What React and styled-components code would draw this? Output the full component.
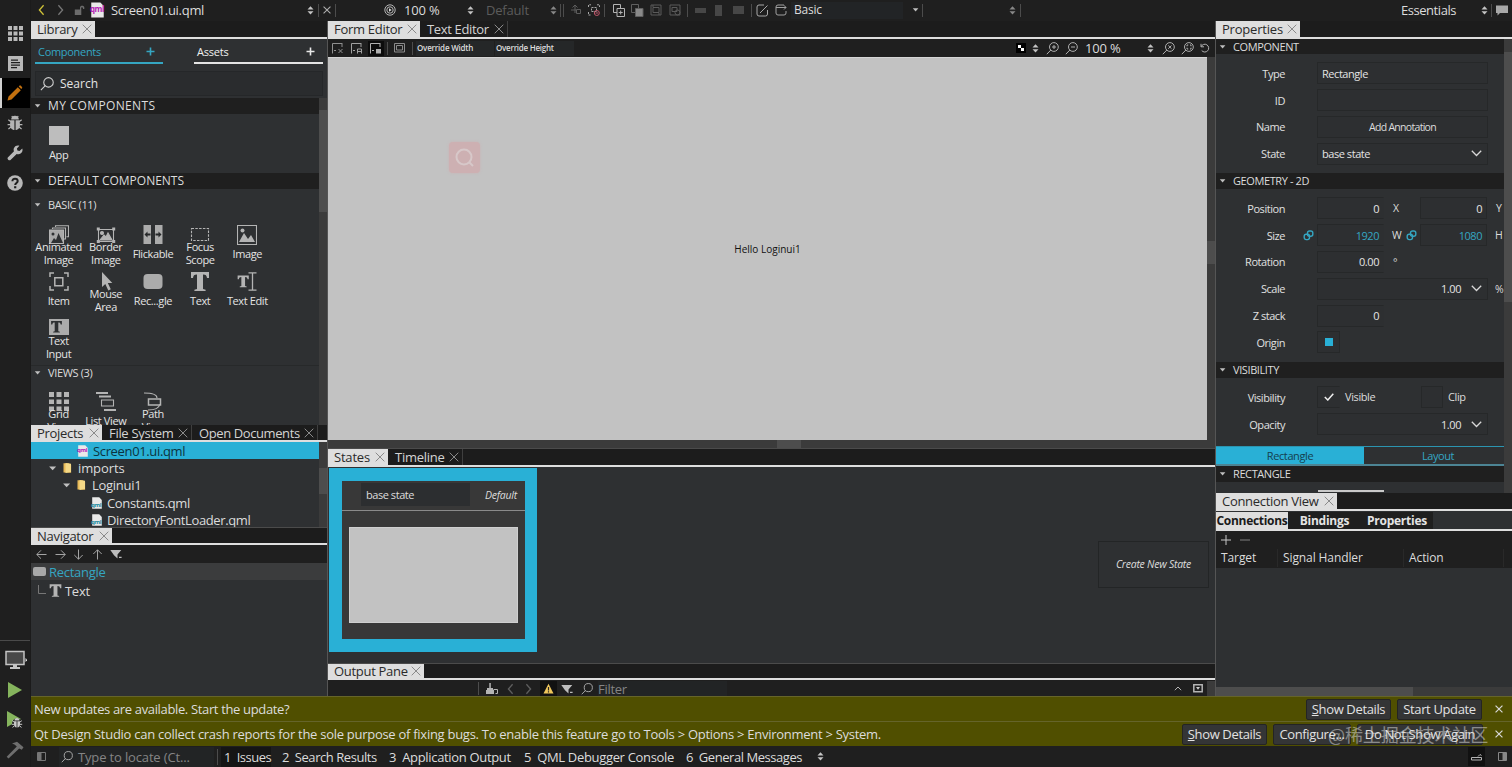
import React from "react";
import styled, { createGlobalStyle, ThemeProvider } from "styled-components";

const theme = {
    bar: "#1f1f1f",
    panel: "#2e3032",
    field: "#2d2f31",
    line: "#262829",
    accent: "#29b0d6",
    accentText: "#35a6c2",
    tab: "#dedede",
    text: "#dcdcdc",
    scroll: "#3b3b3b",
    handle: "#4d4d4d",
    canvas: "#c2c2c2",
    info: "#504f00",
};

const GlobalStyle = createGlobalStyle`
    * { box-sizing: border-box; }
    body {
        margin: 0;
        overflow: hidden;
        background: #1f1f1f;
        font-family: "Open Sans", "Noto Sans", "Noto Sans CJK SC", sans-serif;
        font-size: 13px;
        color: #dcdcdc;
    }
    svg { display: block; flex: none; }
`;

const Window = styled.div`
    display: flex;
    width: 1512px;
    height: 767px;
    background: ${p => p.theme.bar};
    white-space: nowrap;
    overflow: hidden;
`;

const Column = styled.div`
    display: flex;
    flex-direction: column;
    min-width: 0;
    width: ${p => p.$w ? `${p.$w}px` : "auto"};
    flex: ${p => p.$w ? "none" : 1};
    border-left: ${p => p.$edge ? "1px solid #555" : "none"};
`;

const Row = styled.div`
    display: flex;
    align-items: center;
    height: ${p => p.$h ? `${p.$h}px` : "auto"};
    flex: none;
`;

const Gap = styled.span`
    flex: none;
    width: ${p => p.$w}px;
`;

const Fill = styled.span`
    flex: 1;
`;

const Label = styled.span`
    display: block;
    flex: none;
    width: ${p => p.$w ? `${p.$w}px` : "auto"};
    font-size: ${p => p.$size || 13}px;
    line-height: 16px;
    letter-spacing: ${p => p.$ls === undefined ? (p.$size ? 0 : -0.29) : p.$ls}px;
    color: ${p => p.$color || p.theme.text};
    text-align: ${p => p.$align || "left"};
    font-style: ${p => p.$italic ? "italic" : "normal"};
    font-weight: ${p => p.$bold ? 600 : 400};
`;

const Divider = styled.span`
    width: 1px;
    height: ${p => p.$h || 13}px;
    flex: none;
    background: #4c4c4c;
`;

/* mode selector on the far left */
const ModeBar = styled.div`
    display: flex;
    flex-direction: column;
    width: 31px;
    flex: none;
    padding-top: 18px;
    border-right: 1px solid #1b1b1b;
`;

const Mode = styled.div`
    display: flex;
    align-items: center;
    justify-content: center;
    height: 30px;
    flex: none;
    background: ${p => p.$on ? "#000" : "transparent"};
    border-left: ${p => p.$on ? "2px solid #d0d0d0" : "none"};
    padding-right: ${p => p.$on ? 2 : 0}px;
`;

const RunArea = styled.div`
    margin-top: auto;
    height: 127px;
    border-top: 1px solid #4a4a4a;
    padding-top: 4px;
`;

const Workspace = styled.div`
    display: flex;
    height: 675px;
`;

/* dock tabs */
const TabStrip = styled.div`
    display: flex;
    height: ${p => p.$h || 18}px;
    flex: none;
    background: #1c1c1c;
    border-bottom: 2px solid ${p => p.theme.tab};
    border-top: ${p => p.$top ? "1px solid #4b4b4b" : "none"};
`;

const TabItem = styled.div`
    display: flex;
    align-items: center;
    justify-content: space-between;
    width: ${p => p.$w}px;
    padding: 0 3px 0 ${p => p.$on ? 6 : 7}px;
    background: ${p => p.$on ? p.theme.tab : "transparent"};
    border-right: ${p => p.$on ? "none" : "1px solid #3f3f3f"};
`;

const Toolbar = styled.div`
    display: flex;
    align-items: center;
    flex: none;
    height: ${p => p.$h}px;
    padding-top: ${p => p.$pt || 0}px;
    padding-bottom: ${p => p.$pb || 0}px;
    background: ${p => p.theme.bar};
`;

const Panel = styled.div`
    display: flex;
    flex: none;
    height: ${p => p.$h}px;
    background: ${p => p.theme.panel};
    overflow: hidden;
`;

const Track = styled.div`
    width: 8px;
    flex: none;
    padding-top: ${p => p.$top}px;
    background: ${p => p.theme.scroll};
    &::before {
        content: "";
        display: block;
        height: ${p => p.$len}px;
        background: ${p => p.theme.handle};
    }
`;

const ScrollSlot = styled.div`
    display: flex;
    align-self: stretch;
`;

const LibTab = styled.div`
    display: flex;
    align-items: center;
    justify-content: space-between;
    width: ${p => p.$w}px;
    height: 25px;
    padding: 2px 8px 0 3px;
    border-bottom: 2px solid ${p => p.$on ? p.theme.accentText : "#e4e4e4"};
`;

const SearchBox = styled.div`
    display: flex;
    align-items: center;
    flex: none;
    gap: 6px;
    height: 25px;
    margin: 7px 4px 2px;
    padding-left: 4px;
    background: #2a2c2e;
    border: 1px solid #252729;
`;

const Section = styled.div`
    display: flex;
    align-items: center;
    flex: none;
    height: ${p => p.$h || 16}px;
    gap: 7px;
    padding-left: 3px;
    background: ${p => p.$plain ? "transparent" : "#1f1f1f"};
    border-top: ${p => p.$line ? "1px solid #27292a" : "none"};
`;

const ItemGrid = styled.div`
    display: grid;
    flex: none;
    grid-template-columns: repeat(5, 47.2px);
    grid-auto-rows: 47px;
    padding: ${p => p.$pt}px 0 0 4px;
    height: ${p => p.$h}px;
    overflow: hidden;
`;

const Item = styled.div`
    display: flex;
    flex-direction: column;
    align-items: center;
`;

const ItemText = styled.div`
    display: flex;
    flex-direction: column;
    align-items: center;
    justify-content: center;
    height: 16px;
    font-size: 11px;
    line-height: 13px;
    letter-spacing: -0.38px;
    color: #e4e4e4;
`;

const TreeRow = styled.div`
    display: flex;
    align-items: center;
    gap: ${p => p.$gap || 5}px;
    flex: none;
    height: ${p => p.$h || 17.35}px;
    padding-left: ${p => p.$in}px;
    background: ${p => p.$on ? p.theme.accent : p.$hl ? "#3b3c3d" : "transparent"};
`;

const Dark = styled.div`
    display: flex;
    align-items: center;
    flex: none;
    height: ${p => p.$h || 15}px;
    width: ${p => p.$w}px;
    padding-left: ${p => p.$pl || 0}px;
    background: ${p => p.$bg || "#252728"};
`;

/* form editor */
const Canvas = styled.div`
    display: flex;
    justify-content: center;
    align-items: center;
    flex: 1;
    position: relative;
    background: ${p => p.theme.canvas};
    border-top: 1px solid #d5d5d5;
`;

const Finder = styled.div`
    position: absolute;
    left: 121px;
    top: 84px;
    width: 31px;
    height: 31px;
    display: flex;
    align-items: center;
    justify-content: center;
    border-radius: 4px;
    background: #cdb0b2;
    box-shadow: 0 0 3px #cbb3b5;
`;

const BottomTrack = styled.div`
    display: flex;
    justify-content: center;
    height: 8px;
    background: ${p => p.theme.scroll};
    &::before {
        content: "";
        width: 24px;
        background: #4d4d4d;
        margin-left: 34px;
    }
`;

/* states */
const StateCard = styled.div`
    width: 208px;
    height: 184px;
    margin: 1px 0 0 1px;
    border: 13px solid ${p => p.theme.accent};
    border-right-width: 12px;
    background: #383838;
`;

const StateHead = styled.div`
    display: flex;
    align-items: center;
    height: 30px;
    padding: 0 0 2px 19px;
    border-bottom: 1px solid #8a8a8a;
`;

const StatePreview = styled.div`
    width: 169px;
    height: 96px;
    margin: 16px 0 0 7px;
    background: ${p => p.theme.canvas};
    border: 1px solid #cfcfcf;
`;

const NewState = styled.div`
    display: flex;
    align-items: center;
    justify-content: center;
    width: 111px;
    height: 47px;
    margin: 74px 6px 0 auto;
    padding-bottom: 1px;
    border: 1px solid #232526;
`;

/* properties */
const PropRow = styled.div`
    display: flex;
    align-items: center;
    height: 26.8px;
`;

const PropName = styled.div`
    width: 69px;
    flex: none;
    text-align: right;
    font-size: 11px;
    letter-spacing: -0.45px;
    color: #e0e0e0;
`;

const Field = styled.div`
    display: flex;
    align-items: center;
    justify-content: ${p => p.$align || "flex-start"};
    flex: none;
    width: ${p => p.$w}px;
    height: 22px;
    padding: 0 ${p => p.$pr === undefined ? 4 : p.$pr}px 0 4px;
    font-size: 11px;
    letter-spacing: -0.45px;
    color: ${p => p.$blue ? p.theme.accentText : "#e4e4e4"};
    background: ${p => p.theme.field};
    border: 1px solid ${p => p.theme.line};
    border-right-color: ${p => p.$open ? "transparent" : p.theme.line};
`;

const Switcher = styled.div`
    display: flex;
    flex: none;
    height: 20px;
    border-top: 1px solid #2b94b0;
    border-bottom: 2px solid #4c8494;
`;

const Switch = styled.div`
    display: flex;
    align-items: center;
    justify-content: center;
    flex: none;
    width: ${p => p.$w}px;
    padding-bottom: 1px;
    font-size: 11px;
    letter-spacing: -0.4px;
    color: ${p => p.$on ? "#16404e" : p.theme.accentText};
    background: ${p => p.$on ? p.theme.accent : "transparent"};
`;

const PadBlock = styled.div`
    flex: none;
    height: ${p => p.$h}px;
    padding-top: ${p => p.$pt}px;
    overflow: hidden;
    background: ${p => p.theme.panel};
`;

const Unit = styled.span`
    width: ${p => p.$w || 21}px;
    flex: none;
    padding-left: 7px;
    font-size: 10.5px;
    color: #dcdcdc;
`;

const Dot = styled.span`
    width: 8px;
    height: 8px;
    flex: none;
    background: ${p => p.theme.accent};
`;

const NextField = styled.div`
    width: 66px;
    height: 2px;
    margin: 8px 0 0 102px;
    background: #c9c9c9;
`;

/* connections */
const ConnTabs = styled.div`
    display: flex;
    height: 20px;
    flex: none;
    padding-top: 1px;
    background: #2e3032;
    border-bottom: 2px solid ${p => p.theme.tab};
`;

const ConnTab = styled.div`
    display: flex;
    align-items: center;
    justify-content: center;
    width: ${p => p.$w}px;
    height: 17px;
    font-size: 12px;
    font-weight: 700;
    letter-spacing: ${p => p.$ls || 0}px;
    color: ${p => p.$on ? "#1a1a1a" : "#e4e4e4"};
    background: ${p => p.$on ? p.theme.tab : "#1f1f1f"};
`;

const TableHead = styled.div`
    width: ${p => p.$w}px;
    height: 18px;
    padding-left: 5px;
    line-height: 18px;
    font-size: 12px;
    letter-spacing: -0.1px;
    border-right: 1px solid #292929;
`;

const SideTrack = styled.div`
    height: 9px;
    background: ${p => p.theme.scroll};
    &::before {
        content: "";
        display: block;
        width: 197px;
        height: 9px;
        background: ${p => p.theme.handle};
    }
`;

/* notification bars */
const InfoBar = styled.div`
    display: flex;
    align-items: center;
    height: 25px;
    flex: none;
    padding-left: 3px;
    background: ${p => p.theme.info};
    border-top: 1px solid #65642a;
`;

const Button = styled.div`
    display: flex;
    align-items: center;
    justify-content: center;
    flex: none;
    width: ${p => p.$w}px;
    height: 21px;
    margin-right: 6px;
    font-size: 13px;
    letter-spacing: -0.36px;
    color: #e2e2e2;
    background: #343536;
    border: 1px solid #242424;
    border-radius: 2px;
    u { text-underline-offset: 1px; }
`;

const Watermark = styled.div`
    position: absolute;
    left: 1328px;
    top: 721px;
    font-family: "Noto Sans CJK SC", sans-serif;
    font-size: 18px;
    line-height: 26px;
    letter-spacing: -0.1px;
    color: rgba(225, 225, 225, 0.5);
`;

const Svg = ({ w = 16, h, vb, children, c = "#b4b4b4", sw = 1, f = "none" }) => (
    <svg width={w} height={h || w} viewBox={vb || `0 0 ${w} ${h || w}`}
        fill={f} stroke={f === "none" ? c : "none"} strokeWidth={sw}>
        {children}
    </svg>
);

const Cross = ({ c = "#8a8a8a", s = 10, sw = 1 }) => (
    <Svg w={s} vb="0 0 10 10" c={c} sw={sw}><path d="M.7.7l8.6 8.6M9.3.7L.7 9.3" /></Svg>
);
const Down = ({ c = "#c0c0c0", w = 7 }) => <Svg w={w} h={w === 7 ? 4 : 5} vb="0 0 7 4" f={c}><path d="M.8.3h5.6L3.6 3.4z" /></Svg>;
const UpDown = ({ c = "#c4c4c4" }) => (
    <Svg w={7} h={9} f={c}><path d="M.5 3.6h6L3.500.3zM.5 5.200h6L3.500 8.500z" /></Svg>
);
const Chevron = () => <Svg w={11} h={7} c="#d8d8d8" sw={1.3}><path d="M.8.8l4.7 4.7L10.2.8" /></Svg>;
const Angle = ({ c = "#777", left }) => (
    <Svg w={7} h={12} c={c} sw={1.3}><path d={left ? "M5.6 1.2L1.4 6l4.2 4.8" : "M1.4 1.2L5.6 6l-4.2 4.8"} /></Svg>
);
const Plus = ({ c = "#e8e8e8" }) => <Svg w={9} c={c} sw={1.6}><path d="M4.5.5v8M.5 4.5h8" /></Svg>;
const Loupe = ({ w = 13, c = "#b0b0b0", children }) => (
    <Svg w={w} vb="0 0 13 13" c={c}><circle cx="7.9" cy="5" r="4.4" /><path d="M4.9 8L.8 12.2" />{children}</Svg>
);
const Arrow = ({ r }) => (
    <Svg w={11} c="#a4a4a4"><path transform={`rotate(${r} 5.5 5.5)`} d="M10.5 5.5H.8M5 1.3L.8 5.5 5 9.7" /></Svg>
);
const Funnel = () => <Svg w={13} h={10} f="#bdbdbd"><path d="M.3 1h11L7.500 5.500v3.900L4 6.200zM9 7.700h2.600v1.300H9z" /></Svg>;
const Bug = ({ c = "#b4b4b4", w = 16 }) => (
    <Svg w={w} vb="0 0 16 16" c={c} sw={1.2}>
        <path d="M3.400 5.300h4v9.700C5 15 3 12.800 3 10zM12.600 5.300h-4v9.700c2.400 0 4.400-2.200 4.400-5zM4.200 4.500a3.800 3.800 0 017.600 0z" fill={c} stroke="none" />
        <path d="M4 6.8L1.3 4.8M3.6 9.7H.6M4 12l-2.6 2M12 6.8l2.7-2M12.4 9.7h3M12 12l2.6 2M5.8 2.5L4.8 1M10.2 2.5l1-1.5" />
    </Svg>
);
const Chain = () => (
    <Svg w={11} c="#35a6c2" sw={1.4}>
        <rect x="4.500" y="1" width="5.300" height="5.300" rx="2" /><rect x="1.200" y="4.300" width="5.300" height="5.300" rx="2" />
    </Svg>
);
const Folder = () => (
    <Svg w={9} h={12}><path d="M.5 1.3h5l2.600 1.500v8L.5 10.500z" fill="#e8ba58" stroke="none" /><path d="M2.500 1l5.500.8V10l-5.500 1z" fill="#f5d987" stroke="none" /></Svg>
);

const SmallTag = styled.span`
    position: absolute;
    left: 0;
    bottom: ${p => p.$b || 0}px;
    font-size: ${p => p.$size}px;
    font-weight: 700;
    line-height: 1;
    letter-spacing: -0.5px;
    color: ${p => p.$color};
`;

const FileBox = styled.span`
    position: relative;
    display: flex;
    flex: none;
    width: ${p => p.$w}px;
    justify-content: center;
`;

const QmlFile = ({ big, purple }) => (
    <FileBox $w={big ? 15 : 11}>
        <Svg w={big ? 13 : 10} h={big ? 16 : 12} vb="0 0 10 12" f="#e9e9e9"><path d="M.2.300h7l2.600 2.700v8.700H.2z" /></Svg>
        <SmallTag $size={big ? 8 : 6} $b={big ? 5 : purple ? 4 : 1} $color={purple ? "#b420b4" : "#23889f"}>qml</SmallTag>
    </FileBox>
);

const Frame = "M.5.5h19v19H.5z";
const Peaks = "M2 17l5-9 4 6 3-4 4 7z";
const Serif = "M1 0h18v6h-2c-.4-2.3-1-3.4-4-3.4V17l2.6.8V19H4.4v-1.2L7 17V2.6C4 2.6 3.4 3.700 3 6H1z";

const drawings = {
    app: <path d="M0 0h20v19H0z" fill="#bdbdbd" stroke="none" />,
    animated: (
        <g><path d="M3.500 4V3h13v11h-2M6.500 2V.8h13v11h-2" /><path d="M.5 5h14v13.500H.5z" fill="#a8a8a8" /><path d="M2 18l3-5 2 2 2.500-7L14 18z" fill="#2e3032" stroke="none" /><circle cx="4" cy="9" r="1.500" fill="#2e3032" stroke="none" /></g>
    ),
    border: (
        <g><path d="M2.500 4.500h15v12h-15z" /><path d="M4 15l4-5 2 2 2-4 4 7z" fill="#b4b4b4" /><circle cx="6" cy="8" r="1.500" fill="#b4b4b4" /><path d="M.8 2.500h3v3h-3zM16.200 2.500h3v3h-3zM.8 15h3v3h-3zM16.200 15h3v3h-3z" fill="#b4b4b4" stroke="none" /></g>
    ),
    flick: (
        <g><path d="M.500 0h7.500v19H.500zM12 0h7.500v19H12z" fill="#ababab" stroke="none" /><path d="M1.500 9.500l3-3v2h3v2h-3v2zM18.500 9.500l-3-3v2h-3v2h3v2z" fill="#26282a" stroke="none" /></g>
    ),
    focus: <path d="M1.500 3.500h17v12h-17z" strokeDasharray="2.500 1.300" />,
    image: <g><path d={Frame} /><path d={Peaks} fill="#b4b4b4" stroke="none" /><circle cx="5.500" cy="5.500" r="2" fill="#b4b4b4" stroke="none" /></g>,
    item: <g strokeWidth="1.500"><path d="M1 5V1h4M15 1h4v4M19 14v4h-4M5 18H1v-4" /><path d="M5.800 5.800h8v8h-8z" /></g>,
    mouse: <path d="M6 0v15l3.300-3 3 6.500 2.500-1.200L11.800 11h4.500z" fill="#b4b4b4" stroke="none" />,
    rect: <rect x=".5" y="2" width="19" height="15" rx="4" fill="#ababab" stroke="none" />,
    text: <path d={Serif} fill="#b4b4b4" stroke="none" />,
    edit: <g><g transform="translate(0 3.500) scale(.62)"><path d={Serif} fill="#b4b4b4" stroke="none" /></g><path d="M11.500.8h8M11.500 18.200h8M15.500 1v17" strokeWidth="1.300" /></g>,
    input: <g><path d="M0 0h20v16H0z" fill="#ababab" stroke="none" /><g transform="translate(1.500 2) scale(.6)"><path d={Serif} fill="#2e3032" stroke="none" /></g></g>,
    grid: <path d="M0 0h5v5H0zM7.500 0h5v5h-5zM15 0h5v5h-5zM0 7.500h5v4.500H0zM7.500 7.500h5v4.500h-5zM15 7.500h5v4.500h-5zM0 14.500h5V19H0zM7.500 14.500h5V19h-5zM15 14.500h5V19h-5z" fill="#b4b4b4" stroke="none" />,
    list: <g><path d="M0 1h12M3 4.500h12M8 18h12" strokeWidth="2" /><path d="M5.500 8h12v6h-12z" /></g>,
    path: <g><path d="M1 1c8 0 13 2 13 5M17 12c-1 5-7 6-12 6" /><path d="M5.500 7h12v6h-12z" strokeWidth="1.500" /></g>,
};

const LibraryItem = ({ icon, lines }) => (
    <Item>
        <Svg w={20} sw={1.1}>{drawings[icon]}</Svg>
        <ItemText>{lines.map(l => <span key={l}>{l}</span>)}</ItemText>
    </Item>
);

const basic = [
    ["animated", "Animated", "Image"],
    ["border", "Border", "Image"],
    ["flick", "Flickable"],
    ["focus", "Focus", "Scope"],
    ["image", "Image"],
    ["item", "Item"],
    ["mouse", "Mouse", "Area"],
    ["rect", "Rec...gle"],
    ["text", "Text"],
    ["edit", "Text Edit"],
    ["input", "Text", "Input"],
];

const views = [
    ["grid", "Grid", "View"],
    ["list", "List View"],
    ["path", "Path", "View"],
];

const Tab = ({ w, on, ls, children }) => (
    <TabItem $w={w} $on={on}>
        <Label $color={on ? "#2a2a2a" : "#d4d4d4"} $ls={ls}>{children}</Label>
        <Cross />
    </TabItem>
);

const Modes = () => (
    <ModeBar>
        <Mode><Svg w={15} f="#b8b8b8"><path d="M0 0h4v4H0zM5.500 0h4v4h-4zM11 0h4v4h-4zM0 5.500h4v4H0zM5.500 5.500h4v4h-4zM11 5.500h4v4h-4zM0 11h4v4H0zM5.500 11h4v4h-4zM11 11h4v4h-4z" /></Svg></Mode>
        <Mode><Svg w={15} f="#b8b8b8"><path fillRule="evenodd" d="M0 0h15v15H0zM3 3.500v1.300h7V3.500zM3 6v1.300h9V6zM3 8.500v1.300h9V8.500zM3 11v1.200h6V11z" /></Svg></Mode>
        <Mode $on><Svg w={16} f="#c2700f"><path d="M.5 15.500l1-4L10.800 2.200l3 3L4.500 14.500zM11.700 1.400l1-1c.5-.5 3 2 2.500 2.500l-1 1z" /></Svg></Mode>
        <Mode><Bug /></Mode>
        <Mode>
            <Svg w={16} f="#b8b8b8"><path d="M15.300 3.600l-2.800 2.500-2.100-.5-.5-2.100L12.400.7C10.300 0 8 .8 7 2.900c-.6 1.200-.4 2.200 0 3.400L.8 12.400c-1.100 1.300 1.200 3.800 2.700 2.700l6.200-6.200c1.400.5 2.700.4 3.900-.4 1.700-1.200 2.300-3.100 1.700-4.900z" /></Svg>
        </Mode>
        <Mode>
            <Svg w={16} f="#b8b8b8"><circle cx="8" cy="8" r="7.800" /><path d="M5.400 6.200C5.400 2.700 10.700 3 10.700 6c0 2-2.500 2-2.500 4" fill="none" stroke="#1f1f1f" strokeWidth="2" /><path d="M7.100 11.200h2.200v2.100H7.100z" fill="#1f1f1f" /></Svg>
        </Mode>
        <RunArea>
            <Mode>
                <Svg w={24} h={20}><path d="M3 1.500h18v13H3z" fill="#484848" stroke="#c4c4c4" strokeWidth="1.500" /><path d="M10 15h4v2h3v2H7v-2h3z" fill="#c4c4c4" stroke="none" /><path d="M22.500 8v4l2-2z" fill="#ddd" stroke="none" /></Svg>
            </Mode>
            <Mode><Svg w={16} h={18} f="#85b45d"><path d="M1 1l14 8-14 8z" /></Svg></Mode>
            <Mode>
                <Svg w={20} h={20} f="#85b45d">
                    <path d="M2 1l14 8-14 8z" />
                    <circle cx="12" cy="13.500" r="5" fill="#1f1f1f" />
                    <path d="M9.500 10.500a2.500 2.500 0 015 0zM9 11.300h2.600v6.200c-1.600 0-2.600-1.500-2.600-3zM12.400 11.300H15v3.200c0 1.500-1 3-2.600 3z" fill="#c8c8c8" />
                    <path d="M9 12l-1.800-1.300M9 14.300H6.800M9.300 16l-1.800 1.400M15 12l1.800-1.300M15 14.300h2.200M14.700 16l1.800 1.400" stroke="#c8c8c8" />
                </Svg>
            </Mode>
            <Mode><Svg w={18} f="#6e6e6e"><path d="M6 2.500L11 .8l6.500 5.500-1.700 2.400-2.600-1.200L2.500 17.500.7 15.800 10.800 5.500 8.500 3.400z" /></Svg></Mode>
        </RunArea>
    </ModeBar>
);

const TopBar = () => (
    <Toolbar $h={21} $pb={1}>
        <Gap $w={7} /><Angle left c="#cfc238" /><Gap $w={12} /><Angle />
        <Gap $w={10} />
        <Svg w={11} f="#6c6c6c"><path d="M.8 4.500h6.500V10H.8zM6 5V2.500C6 0 10.300 0 10.300 2.500V4H9c0-2.300-1.800-2.300-1.800-.5V5z" /></Svg>
        <Gap $w={5} /><QmlFile big purple /><Gap $w={6} />
        <Label $w={196}>Screen01.ui.qml</Label>
        <UpDown /><Gap $w={4} /><Divider /><Gap $w={4} /><Cross c="#b0b0b0" s={8} sw={1.3} />
        <Gap $w={4} /><Divider /><Gap $w={48} />
        <Svg w={12}><circle cx="6" cy="6" r="5.200" /><circle cx="6" cy="6" r="3.200" /><path d="M5 4.200v3.600L7.700 6z" fill="#ddd" stroke="none" /></Svg>
        <Gap $w={8} /><Label $w={63} $ls={-0.2}>100 %</Label><UpDown />
        <Gap $w={12} /><Label $w={64} $color="#5c5c5c" $ls={-0.2}>Default</Label><UpDown c="#888" />
        <Gap $w={3} /><Divider /><Gap $w={2} /><Divider /><Gap $w={6} />
        <Svg w={12} c="#5c5c5c"><path d="M5 9V1M2.500 3.500L5 1l2.500 2.500M1 6h5M6.500 5.500h4v4h-4z" /></Svg><Gap $w={6} />
        <Svg w={12} c="#a8a8a8"><path d="M.5 3V.8H3M9 .8h2.500V3M.5 8v3H3M3.500 3.500h5v4h-5z" strokeDasharray="2 1" /><circle cx="8.800" cy="9" r="2.500" stroke="#c0566a" /><path d="M7.500 9h2.600" stroke="#c0566a" /></Svg>
        <Gap $w={4} /><Divider /><Gap $w={8} />
        <Svg w={12} h={13} c="#b4b4b4"><path d="M.5.500h7v8h-7z" /><path d="M4 4.500h7.500v8H4z" fill="#1f1f1f" /><path d="M7.700 6.500v4M5.700 8.500h4" /></Svg><Gap $w={6} />
        <Svg w={13} h={13} c="#606060"><path d="M.5.500h7v8h-7z" /><path d="M4.500 4.500H12v8H4.500z" fill="#8a8a8a" /></Svg><Gap $w={6} />
        <Svg w={12} c="#5a5a5a"><path d="M1 1h10v10H1zM3 3.500h6v5H3zM3 1v2M9 9v2" /></Svg><Gap $w={7} />
        <Svg w={12} c="#5a5a5a"><path d="M1 1h10v10H1zM3 3.500h5v4H3z" /><circle cx="8.500" cy="8.500" r="2.500" /></Svg>
        <Gap $w={6} /><Divider /><Gap $w={7} />
        <Svg w={11} h={7} f="#474747"><path d="M0 1h11v5H0z" /></Svg><Gap $w={9} />
        <Svg w={7} h={11} f="#474747"><path d="M0 0h7v11H0z" /></Svg><Gap $w={11} />
        <Svg w={11} h={8} f="#474747"><path d="M0 0h11v8H0z" /></Svg>
        <Gap $w={7} /><Divider /><Gap $w={4} />
        <Svg w={13} c="#a8a8a8"><path d="M8 1H3a2 2 0 00-2 2v7a2 2 0 002 2h6.500a2 2 0 002-2V6M4 9l7.500-7.500" /></Svg><Gap $w={6} />
        <Svg w={12} c="#a0a0a0"><path d="M9 1H3a2 2 0 00-2 2v6a2 2 0 002 2h6a2 2 0 002-2V7M1 3.500h10M9 1.300L11 3.500 9 5.500" /></Svg>
        <Gap $w={4} />
        <Dark $w={112} $h={17} $pl={3} $bg="#222426"><Label $size={12} $ls={-0.2}>Basic</Label></Dark>
        <Gap $w={9} /><Down /><Gap $w={3} /><Divider /><Gap $w={86} /><UpDown c="#888" /><Gap $w={4} /><Divider />
        <Fill />
        <Label $ls={-0.45}>Essentials</Label><Gap $w={25} /><UpDown /><Gap $w={3} /><Divider />
        <Gap $w={3} /><Svg w={13} h={11} f="#a8a8a8"><path d="M1 .500h12v7.500H5L2.500 10.500V8H1z" /></Svg><Gap $w={4} />
    </Toolbar>
);

const Library = () => (
    <>
        <TabStrip><Tab w={64} on>Library</Tab></TabStrip>
        <Panel $h={386}>
            <Column>
                <Row $h={25}>
                    <Gap $w={4} />
                    <LibTab $w={128} $on><Label $size={11} $ls={-0.3} $color="#35a6c2">Components</Label><Plus c="#35a6c2" /></LibTab>
                    <Gap $w={31} />
                    <LibTab $w={129}><Label $size={11} $ls={-0.2} $color="#f0f0f0">Assets</Label><Plus /></LibTab>
                </Row>
                <SearchBox><Loupe w={14} c="#d0d0d0" /><Label $size={12} $color="#e4e4e4">Search</Label></SearchBox>
                <Row>
                    <Column $w={288}>
                        <Section><Down /><Label $size={12} $ls={0.35}>MY COMPONENTS</Label></Section>
                        <ItemGrid $pt={12} $h={59}><LibraryItem icon="app" lines={["App"]} /></ItemGrid>
                        <Section><Down /><Label $size={12}>DEFAULT COMPONENTS</Label></Section>
                        <Section $plain $h={31}><Down /><Label $size={11} $ls={-0.4}>BASIC (11)</Label></Section>
                        <ItemGrid $pt={5} $h={145}>
                            {basic.map(([icon, ...lines]) => <LibraryItem key={icon} icon={icon} lines={lines} />)}
                        </ItemGrid>
                        <Section $plain $line $h={15}><Down /><Label $size={11} $ls={-0.35}>VIEWS (3)</Label></Section>
                        <ItemGrid $pt={12} $h={45}>
                            {views.map(([icon, ...lines]) => <LibraryItem key={icon} icon={icon} lines={lines} />)}
                        </ItemGrid>
                    </Column>
                    <ScrollSlot><Track $top={12} $len={102} /></ScrollSlot>
                </Row>
            </Column>
        </Panel>
    </>
);

const Projects = () => (
    <>
        <TabStrip $h={17}>
            <Tab w={71} on>Projects</Tab>
            <Tab w={90} ls={-0.3}>File System</Tab>
            <Tab w={126} ls={-0.4}>Open Documents</Tab>
        </TabStrip>
        <Panel $h={85}>
            <Column>
                <TreeRow $on $in={46}><QmlFile purple /><Label $ls={-0.35} $color="#0c3440">Screen01.ui.qml</Label></TreeRow>
                <TreeRow $in={17} $gap={6}><Down w={9} /><Folder /><Label $ls={-0.1}>imports</Label></TreeRow>
                <TreeRow $in={31} $gap={6}><Down w={9} /><Folder /><Label>Loginui1</Label></TreeRow>
                <TreeRow $in={60}><QmlFile /><Label $ls={-0.35}>Constants.qml</Label></TreeRow>
                <TreeRow $in={60}><QmlFile /><Label $ls={-0.38}>DirectoryFontLoader.qml</Label></TreeRow>
            </Column>
            <Track $top={26} $len={26} />
        </Panel>
    </>
);

const Navigator = () => (
    <>
        <TabStrip $top $h={18}><Tab w={81} on>Navigator</Tab></TabStrip>
        <Toolbar $h={18}>
            <Gap $w={5} /><Arrow r={0} /><Gap $w={8} /><Arrow r={180} /><Gap $w={7} /><Arrow r={270} /><Gap $w={8} /><Arrow r={90} /><Gap $w={7} /><Funnel />
        </Toolbar>
        <Panel $h={133}>
            <Column>
                <TreeRow $hl $h={17} $in={2} $gap={3}>
                    <Svg w={13} h={9} f="#a8a8a8"><rect width="13" height="9" rx="2" /></Svg>
                    <Label $color="#35a6c2">Rectangle</Label>
                </TreeRow>
                <TreeRow $h={21} $in={7} $gap={3}>
                    <Svg w={8} h={12} c="#777"><path d="M.5 0v8.500H8" /></Svg>
                    <Svg w={13} h={13} vb="0 0 20 19" f="#b4b4b4"><path d={Serif} /></Svg>
                    <Label>Text</Label>
                </TreeRow>
            </Column>
        </Panel>
    </>
);

const FormEditor = () => (
    <>
        <TabStrip>
            <Tab w={92} on>Form Editor</Tab>
            <Tab w={88} ls={-0.35}>Text Editor</Tab>
        </TabStrip>
        <Toolbar $h={18}>
            <Gap $w={4} />
            <Svg w={12} c="#909090"><path d="M.5 11.500V1.500h10M2 8.500h2M10 2v3M6.500 7l4 4M10.500 7l-4 4" /></Svg><Gap $w={7} />
            <Svg w={12} c="#a0a0a0"><path d="M.5 11.500V1.500h10M2 8.500h2M10 2v3M6.500 11.500V7h4v4.500M6.500 9.500h4" /></Svg><Gap $w={5} />
            <Dark $w={16} $bg="#0c0c0c" $pl={2}>
                <Svg w={12} c="#b0b0b0"><path d="M.5 11.500V1.500h10M2 8.500h2M10 2v3" /><path d="M6 7h5v4.500H6z" fill="#b0b0b0" stroke="none" /></Svg>
            </Dark>
            <Gap $w={3} /><Divider /><Gap $w={6} />
            <Svg w={11} h={10} c="#8c8c8c"><path d="M.5.500h10v8.500H.5zM2.500 2.500h6V7h-6z" /></Svg>
            <Gap $w={7} /><Divider /><Gap $w={3} />
            <Dark $w={78} $pl={1}><Label $size={8} $ls={-0.2} $bold>Override Width</Label></Dark>
            <Gap $w={1} />
            <Dark $w={79} $pl={1}><Label $size={8} $ls={-0.25} $bold>Override Height</Label></Dark>
            <Fill />
            <Svg w={10} f="#000"><path d="M0 0h10v10H0z" /><path d="M2 2h3v3H2zM5 5h3v3H5z" fill="#fff" /></Svg>
            <Gap $w={6} /><UpDown /><Gap $w={7} />
            <Loupe><path d="M6 5h4M8 3v4" /></Loupe><Gap $w={6} />
            <Loupe><path d="M6 5h4" /></Loupe><Gap $w={7} />
            <Label $w={62} $ls={-0.2}>100 %</Label><UpDown /><Gap $w={8} />
            <Loupe><path d="M6.300 3.500l3.200 3.200M9.500 3.500L6.300 6.700" /></Loupe><Gap $w={6} />
            <Loupe><path d="M6 4.300V3h1.300M9 3h1v1.300M6 5.700V7h1.300M9 7h1V5.700" /></Loupe><Gap $w={6} />
            <Svg w={10} c="#b0b0b0"><path d="M1 .8v3h3M1.200 3.600A3.900 3.900 0 111.700 7.500" /></Svg>
            <Gap $w={5} />
        </Toolbar>
        <Panel $h={383}>
            <Canvas>
                <Label $size={10} $color="#111">Hello Loginui1</Label>
                <Finder>
                    <Svg w={21} c="#d7c8c9" sw={2}><circle cx="10" cy="10" r="7.500" /><path d="M15 15l4 4" /></Svg>
                </Finder>
            </Canvas>
            <Track $top={184} $len={23} />
        </Panel>
        <BottomTrack />
    </>
);

const States = () => (
    <>
        <TabStrip $top $h={19}>
            <Tab w={60} on ls={-0.2}>States</Tab>
            <Tab w={75} ls={-0.25}>Timeline</Tab>
        </TabStrip>
        <Panel $h={196}>
            <StateCard>
                <StateHead>
                    <Dark $w={109} $h={23} $pl={5} $bg="#2c2e30"><Label $size={11} $ls={-0.45}>base state</Label></Dark>
                    <Gap $w={15} />
                    <Label $size={10.5} $ls={-0.25} $italic>Default</Label>
                </StateHead>
                <StatePreview />
            </StateCard>
            <NewState><Label $size={10.5} $ls={-0.25} $italic>Create New State</Label></NewState>
        </Panel>
    </>
);

const OutputPane = () => (
    <>
        <TabStrip $top $h={17}><Tab w={96} on ls={-0.3}>Output Pane</Tab></TabStrip>
        <Toolbar $h={16} $pt={1}>
            <Gap $w={150} /><Divider /><Gap $w={7} />
            <Svg w={12} f="#b4b4b4"><path d="M3.300 0h1.500v5H7v2h1v4H0V7h1V5h2.300z" /><path d="M7.500 6.500h4v4h-2" fill="none" stroke="#b4b4b4" /></Svg>
            <Gap $w={9} /><Angle left c="#5f5f5f" /><Gap $w={11} /><Angle c="#5f5f5f" />
            <Gap $w={8} />
            <Dark $w={17} $pl={3} $bg="#111"><Svg w={11}><path d="M5.500.8L10.500 10.500H.5z" fill="#f0c75c" stroke="none" /><path d="M5.500 4v3.500M5.500 8.300v1.200" stroke="#222" strokeWidth="1.200" /></Svg></Dark>
            <Gap $w={4} /><Funnel /><Gap $w={7} /><Loupe w={12} />
            <Gap $w={5} /><Dark $w={129} $bg="#222425"><Label $color="#858585">Filter</Label></Dark>
            <Fill />
            <Svg w={8} h={5} c="#b4b4b4"><path d="M.8 4.200L4 1l3.200 3.200" /></Svg><Gap $w={11} />
            <Svg w={10} h={9} sw={1.5}><path d="M.8.8h8.400v7H.8z" /><path d="M3 3h4L5 5.800z" fill="#ccc" stroke="none" /></Svg>
            <Gap $w={4} /><Dark $w={8} $h={15} $bg="#3b3b3b" />
        </Toolbar>
    </>
);

const Head = ({ h, children }) => (
    <Section $h={h || 16}><Down /><Label $size={11} $ls={-0.4}>{children}</Label></Section>
);

const Properties = () => (
    <>
        <TabStrip><Tab w={84} on ls={-0.2}>Properties</Tab></TabStrip>
        <Panel $h={454}>
            <Column $w={288}>
                <Head h={15}>COMPONENT</Head>
                <PadBlock $h={119} $pt={6}>
                    <PropRow><PropName>Type</PropName><Gap $w={32} /><Field $w={171}>Rectangle</Field></PropRow>
                    <PropRow><PropName>ID</PropName><Gap $w={32} /><Field $w={171} /></PropRow>
                    <PropRow><PropName>Name</PropName><Gap $w={32} /><Field $w={171} $align="center"><Label $size={10.5} $ls={-0.7}>Add Annotation</Label></Field></PropRow>
                    <PropRow><PropName>State</PropName><Gap $w={32} /><Field $w={171} $align="space-between" $pr={5}>base state<Chevron /></Field></PropRow>
                </PadBlock>
                <Head>GEOMETRY - 2D</Head>
                <PadBlock $h={173} $pt={6}>
                    <PropRow><PropName>Position</PropName><Gap $w={32} /><Field $w={67} $open $align="flex-end">0</Field><Gap $w={2} /><Unit $w={34}>X</Unit><Field $w={67} $align="flex-end">0</Field><Gap $w={2} /><Unit>Y</Unit></PropRow>
                    <PropRow><PropName>Size</PropName><Gap $w={18} /><Chain /><Gap $w={3} /><Field $w={67} $open $blue $align="flex-end">1920</Field><Gap $w={1} /><Unit>W</Unit><Chain /><Gap $w={3} /><Field $w={67} $blue $align="flex-end">1080</Field><Gap $w={1} /><Unit>H</Unit></PropRow>
                    <PropRow><PropName>Rotation</PropName><Gap $w={32} /><Field $w={67} $open $align="flex-end">0.00</Field><Gap $w={2} /><Unit>°</Unit></PropRow>
                    <PropRow><PropName>Scale</PropName><Gap $w={32} /><Field $w={171} $align="flex-end" $pr={5}>1.00<Gap $w={10} /><Chevron /></Field><Unit>%</Unit></PropRow>
                    <PropRow><PropName>Z stack</PropName><Gap $w={32} /><Field $w={67} $open $align="flex-end">0</Field></PropRow>
                    <PropRow><PropName>Origin</PropName><Gap $w={32} /><Field $w={23} $align="center"><Dot /></Field></PropRow>
                </PadBlock>
                <Head>VISIBILITY</Head>
                <PadBlock $h={68} $pt={6}>
                    <PropRow>
                        <PropName>Visibility</PropName><Gap $w={32} />
                        <Field $w={23} $open $align="center"><Svg w={10} h={8} c="#eee" sw={1.500}><path d="M.8 4l3 3L9.300.8" /></Svg></Field>
                        <Gap $w={5} /><Label $size={11} $ls={-0.4} $w={76}>Visible</Label>
                        <Field $w={22} /><Gap $w={5} /><Label $size={11} $ls={-0.4}>Clip</Label>
                    </PropRow>
                    <PropRow><PropName>Opacity</PropName><Gap $w={32} /><Field $w={171} $align="flex-end" $pr={5}>1.00<Gap $w={10} /><Chevron /></Field></PropRow>
                </PadBlock>
                <Switcher><Switch $on $w={148}>Rectangle</Switch><Switch $w={148}>Layout</Switch></Switcher>
                <Head>RECTANGLE</Head>
                <NextField />
            </Column>
            <Track $top={13} $len={250} />
        </Panel>
    </>
);

const ConnectionView = () => (
    <>
        <TabStrip><Tab w={121} on ls={-0.3}>Connection View</Tab></TabStrip>
        <ConnTabs>
            <ConnTab $w={72} $on $ls={-0.3}>Connections</ConnTab>
            <ConnTab $w={73} $ls={-0.25}>Bindings</ConnTab>
            <ConnTab $w={72} $ls={-0.25}>Properties</ConnTab>
        </ConnTabs>
        <Toolbar $h={18}>
            <Gap $w={5} /><Svg w={10} c="#c8c8c8"><path d="M5 0v10M0 5h10" /></Svg><Gap $w={9} /><Svg w={10} c="#808080"><path d="M0 5h10" /></Svg>
        </Toolbar>
        <Toolbar $h={19} $pb={1}>
            <TableHead $w={62}>Target</TableHead>
            <TableHead $w={126}>Signal Handler</TableHead>
            <TableHead $w={100}>Action</TableHead>
        </Toolbar>
        <Panel $h={119} />
        <SideTrack />
    </>
);

const Messages = () => (
    <>
        <InfoBar>
            <Label $ls={-0.35}>New updates are available. Start the update?</Label>
            <Fill />
            <Button $w={85}><span><u>S</u>how Details</span></Button>
            <Button $w={85}>Start Update</Button>
            <Gap $w={7} /><Cross c="#d8d8d8" s={8} sw={1.500} /><Gap $w={9} />
        </InfoBar>
        <InfoBar>
            <Label $ls={-0.275}>Qt Design Studio can collect crash reports for the sole purpose of fixing bugs. To enable this feature go to Tools &gt; Options &gt; Environment &gt; System.</Label>
            <Fill />
            <Button $w={85}><span><u>S</u>how Details</span></Button>
            <Button $w={78}>Configure...</Button>
            <Button $w={126}>Do Not Show Again</Button>
            <Gap $w={6} /><Cross c="#d8d8d8" s={8} sw={1.500} /><Gap $w={9} />
        </InfoBar>
    </>
);

const StatusBar = () => (
    <Toolbar $h={21}>
        <Gap $w={6} />
        <Svg w={9} h={9} c="#777"><path d="M.5.500h8v8h-8z" /><path d="M1 1h3v7H1z" fill="#777" /></Svg>
        <Gap $w={13} />
        <Dark $w={155} $h={20} $pl={2} $bg="#222425"><Loupe w={12} /><Gap $w={5} /><Label $ls={-0.15} $color="#858585">Type to locate (Ct...</Label></Dark>
        <Gap $w={3} /><Divider $h={16} /><Gap $w={3} />
        <Dark $w={50} $h={20} $pl={3} $bg="#151515"><Label $ls={-0.5}>1&nbsp; Issues</Label></Dark>
        <Gap $w={11} /><Label $w={107} $ls={-0.45}>2&nbsp; Search Results</Label>
        <Label $w={135} $ls={-0.33}>3&nbsp; Application Output</Label>
        <Label $w={162} $ls={-0.33}>5&nbsp; QML Debugger Console</Label>
        <Label $w={131} $ls={-0.45}>6&nbsp; General Messages</Label>
        <UpDown />
        <Fill />
        <Dark $w={17} $h={19} $pl={3} $bg="#111"><Svg w={11} h={8}><path d="M.5 4.500h10v2.500H.5zM7 3.500l2-2 1.500 1" /></Svg></Dark>
        <Gap $w={13} />
        <Svg w={9} h={9} c="#888"><path d="M.5.500h8v8h-8z" /><path d="M5 1h3v7H5z" fill="#888" /></Svg>
        <Gap $w={5} />
    </Toolbar>
);

const App = () => (
    <ThemeProvider theme={theme}>
        <GlobalStyle />
        <Window>
            <Modes />
            <Column>
                <TopBar />
                <Workspace>
                    <Column $w={296}>
                        <Library />
                        <Projects />
                        <Navigator />
                    </Column>
                    <Column $edge>
                        <FormEditor />
                        <States />
                        <OutputPane />
                    </Column>
                    <Column $w={297} $edge>
                        <Properties />
                        <ConnectionView />
                    </Column>
                </Workspace>
                <Messages />
                <StatusBar />
            </Column>
            <Watermark>@稀土掘金技术社区</Watermark>
        </Window>
    </ThemeProvider>
);

export default App;
